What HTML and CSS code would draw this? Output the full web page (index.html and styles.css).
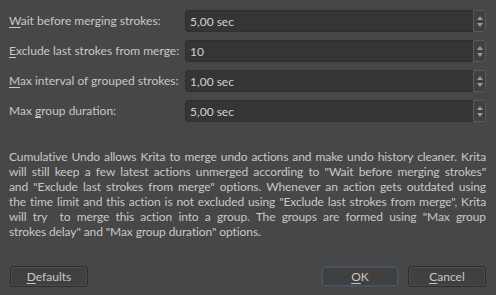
FILE: index.html
```html
<!DOCTYPE html>
<html>
<head>
<meta charset="utf-8">
<link rel="stylesheet" href="styles.css">
</head>
<body>
<div class="dialog">
  <div class="form">
    <label class="lbl"><u>W</u>ait before merging strokes:</label>
    <div class="spin"><span class="val">5,00 sec</span><span class="btns"><i class="up"></i><i class="down"></i></span></div>
    <label class="lbl"><u>E</u>xclude last strokes from merge:</label>
    <div class="spin"><span class="val">10</span><span class="btns"><i class="up"></i><i class="down"></i></span></div>
    <label class="lbl"><u>M</u>ax interval of grouped strokes:</label>
    <div class="spin"><span class="val">1,00 sec</span><span class="btns"><i class="up"></i><i class="down"></i></span></div>
    <label class="lbl">Max <u>g</u>roup duration:</label>
    <div class="spin"><span class="val">5,00 sec</span><span class="btns"><i class="up"></i><i class="down"></i></span></div>
  </div>
  <p class="desc">
    <span class="line">Cumulative Undo allows Krita to merge undo actions and make undo history cleaner. Krita</span>
    <span class="line">will still keep a few latest actions unmerged according to "Wait before merging strokes"</span>
    <span class="line">and "Exclude last strokes from merge" options. Whenever an action gets outdated using</span>
    <span class="line">the time limit and this action is not excluded using "Exclude last strokes from merge", Krita</span>
    <span class="line">will try &nbsp;to merge this action into a group. The groups are formed using "Max group</span>
    <span class="line last">strokes delay" and "Max group duration" options.</span>
  </p>
  <div class="buttons">
    <button class="btn"><u>D</u>efaults</button>
    <span class="spacer"></span>
    <button class="btn default"><u>O</u>K</button>
    <button class="btn"><u>C</u>ancel</button>
  </div>
</div>
</body>
</html>
```
FILE: styles.css
```css
html, body {
  margin: 0;
  padding: 0;
  background: #474747;
}
body {
  width: 496px;
  height: 295px;
  overflow: hidden;
  font-family: Lato, "Liberation Sans", sans-serif;
  font-size: 12px;
  color: #c8c8c8;
}
.dialog {
  display: flex;
  flex-direction: column;
  padding: 10px 10px 8px 9px;
  height: 295px;
  box-sizing: border-box;
}
.form {
  display: grid;
  grid-template-columns: 176px 1fr;
  row-gap: 8px;
  align-items: center;
}
.lbl {
  line-height: 22px;
  white-space: nowrap;
}
u {
  text-decoration: underline;
  text-underline-offset: 2px;
}
.spin {
  height: 22px;
  box-sizing: border-box;
  background: #353535;
  border: 1px solid #2f2f2f;
  border-radius: 3px;
  display: flex;
  align-items: center;
}
.val {
  flex: 1;
  padding-left: 4px;
  color: #d0d0d0;
}
.btns {
  width: 13px;
  height: 22px;
  box-sizing: border-box;
  margin-right: -1px;
  border: 1px solid #5a5a5a;
  border-radius: 0 3px 3px 0;
  background: #404040;
  display: flex;
  flex-direction: column;
  align-items: center;
  justify-content: center;
  gap: 3px;
}
.up, .down {
  width: 0;
  height: 0;
  border-left: 3.5px solid transparent;
  border-right: 3.5px solid transparent;
}
.up { border-bottom: 4px solid #9a9a9a; }
.down { border-top: 4px solid #9a9a9a; }
.desc {
  margin: 27px 0 0 0;
  line-height: 15px;
}
.line {
  display: block;
  white-space: nowrap;
  text-align: justify;
  text-align-last: justify;
  letter-spacing: -0.1px;
}
.line.last {
  text-align-last: left;
}
.buttons {
  margin-top: auto;
  display: flex;
  gap: 8px;
  align-items: center;
}
.spacer { flex: 1; }
.btn {
  width: 78px;
  height: 21px;
  margin-left: 1px;
  background: #404040;
  border: 1px solid #2e2e2e;
  border-radius: 3px;
  box-shadow: inset 0 0 0 1px #4c4c4c;
  color: #c8c8c8;
  font-family: Lato, "Liberation Sans", sans-serif;
  font-size: 12px;
  padding: 0;
}
.btn.default {
  border-color: #3f5060;
  box-shadow: inset 0 0 0 1px #4a5560;
}
```
